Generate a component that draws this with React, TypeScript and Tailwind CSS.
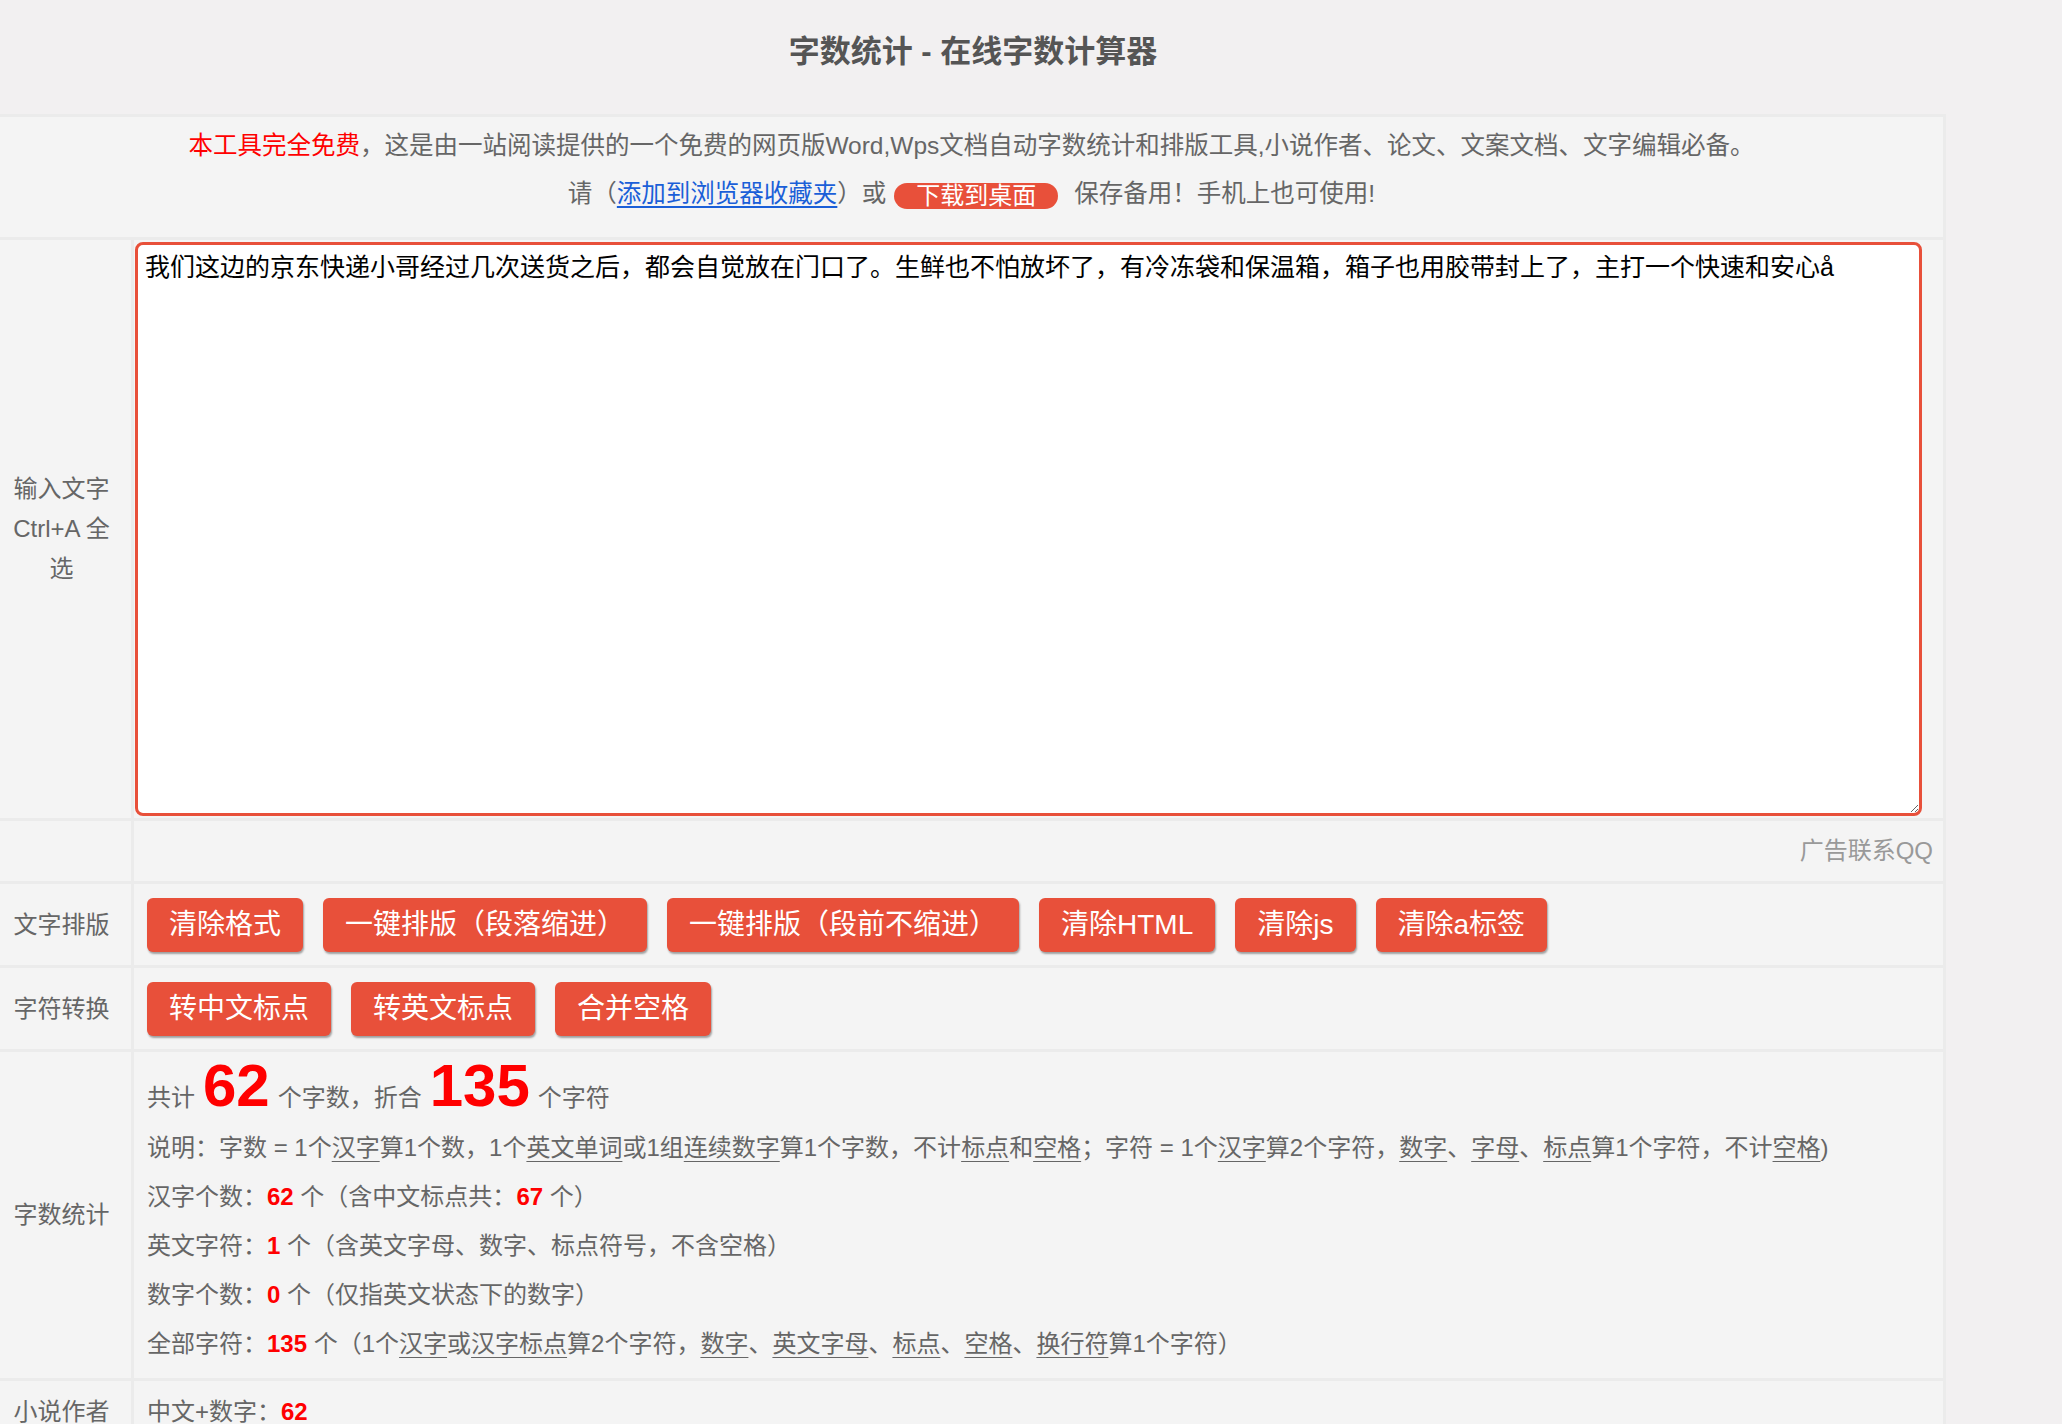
import React, { useState } from 'react';

const SAMPLE =
  '我们这边的京东快递小哥经过几次送货之后，都会自觉放在门口了。生鲜也不怕放坏了，有冷冻袋和保温箱，箱子也用胶带封上了，主打一个快速和安心å';

const layoutButtons = ['清除格式', '一键排版（段落缩进）', '一键排版（段前不缩进）', '清除HTML', '清除js', '清除a标签'];
const convertButtons = ['转中文标点', '转英文标点', '合并空格'];

const RedButton: React.FC<{ label: string }> = ({ label }) => (
  <button className="h-[54px] rounded-[6px] bg-[#e8503a] px-[22px] text-[28px] leading-[54px] text-white shadow-[1px_2px_2px_rgba(0,0,0,0.35)]">
    {label}
  </button>
);

const U: React.FC<{ children: React.ReactNode }> = ({ children }) => (
  <span className="underline underline-offset-[5px] decoration-[1px]">{children}</span>
);

const Num: React.FC<{ children: React.ReactNode }> = ({ children }) => (
  <b className="font-bold text-[#ff0000]">{children}</b>
);

const Label: React.FC<{ children?: React.ReactNode }> = ({ children }) => (
  <div className="flex items-center justify-center bg-[#f4f4f4] pl-[12px] pr-[20px] text-center text-[24px] leading-[40px] text-[#666]">
    <div>{children}</div>
  </div>
);

export default function App() {
  const [text, setText] = useState(SAMPLE);

  return (
    <div className="min-h-screen w-full bg-[#f2f0f1] font-['Liberation_Sans','Noto_Sans_CJK_SC',sans-serif]">
      {/* Header */}
      <h1 className="h-[114px] w-[1946px] pt-[32px] text-center text-[31px] font-bold leading-[40px] text-[#555]">
        字数统计 - 在线字数计算器
      </h1>

      <div className="grid w-[1946px] grid-cols-[131px_1809px] gap-[3px] bg-[#ebebeb] pr-[3px] pt-[3px]">
        {/* Notice */}
        <div className="col-span-2 h-[120px] bg-[#f4f4f4] pt-[5px] text-center text-[24.5px] leading-[48px] text-[#666]">
          <p>
            <span className="text-[#ff0000]">本工具完全免费</span>，这是由一站阅读提供的一个免费的网页版Word,Wps文档自动字数统计和排版工具,小说作者、论文、文案文档、文字编辑必备。
          </p>
          <p>
            请（<a href="#" className="text-[#1a5fd8] underline underline-offset-[4px]">添加到浏览器收藏夹</a>）或
            <span className="ml-[8px] mr-[10px] inline-block h-[26px] rounded-full bg-[#e8503a] px-[22px] align-middle text-[24px] leading-[26px] text-white">
              下载到桌面
            </span>
            <span className="ml-[6px]">保存备用！手机上也可使用!</span>
          </p>
        </div>

        {/* Input */}
        <Label>
          <div className="w-[99px]">输入文字 Ctrl+A 全选</div>
        </Label>
        <div className="bg-[#f4f4f4] py-[2px] pl-[1px]">
          <textarea
            value={text}
            onChange={(e) => setText(e.target.value)}
            className="block h-[574px] w-[1787px] rounded-[8px] border-[3px] border-[#e8503a] bg-white px-[7px] py-[6px] text-[25px] leading-[32px] text-black outline-none"
          />
        </div>

        {/* Ad */}
        <Label />
        <div className="flex h-[60px] items-center justify-end bg-[#f4f4f4] pr-[10px] text-[24px] text-[#999]">
          广告联系QQ
        </div>

        {/* Layout */}
        <Label>文字排版</Label>
        <div className="flex h-[81px] items-center gap-[20px] bg-[#f4f4f4] pl-[13px]">
          {layoutButtons.map((b) => (
            <RedButton key={b} label={b} />
          ))}
        </div>

        {/* Convert */}
        <Label>字符转换</Label>
        <div className="flex h-[81px] items-center gap-[20px] bg-[#f4f4f4] pl-[13px]">
          {convertButtons.map((b) => (
            <RedButton key={b} label={b} />
          ))}
        </div>

        {/* Stats */}
        <Label>字数统计</Label>
        <div className="h-[326px] bg-[#f4f4f4] pl-[13px] text-[24px] leading-[49px] text-[#666]">
          <div className="h-[68px] leading-[68px]">
            共计<b className="mx-[8px] text-[60px] font-bold text-[#ff0000]">62</b>个字数，折合
            <b className="mx-[8px] text-[60px] font-bold text-[#ff0000]">135</b>个字符
          </div>
          <div className="mt-[3px]">
            说明：字数 = 1个<U>汉字</U>算1个数，1个<U>英文单词</U>或1组<U>连续数字</U>算1个字数，不计<U>标点</U>和<U>空格</U>；字符 = 1个<U>汉字</U>算2个字符，<U>数字</U>、<U>字母</U>、<U>标点</U>算1个字符，不计<U>空格</U>)
          </div>
          <div>
            汉字个数：<Num>62</Num> 个（含中文标点共：<Num>67</Num> 个）
          </div>
          <div>
            英文字符：<Num>1</Num> 个（含英文字母、数字、标点符号，不含空格）
          </div>
          <div>
            数字个数：<Num>0</Num> 个（仅指英文状态下的数字）
          </div>
          <div>
            全部字符：<Num>135</Num> 个（1个<U>汉字</U>或<U>汉字标点</U>算2个字符，<U>数字</U>、<U>英文字母</U>、<U>标点</U>、<U>空格</U>、<U>换行符</U>算1个字符）
          </div>
        </div>

        {/* Novel authors */}
        <div className="bg-[#f4f4f4] pl-[12px] pr-[20px] pt-[6px] text-center text-[24px] leading-[49px] text-[#666]">
          小说作者
        </div>
        <div className="h-[80px] bg-[#f4f4f4] pl-[13px] pt-[6px] text-[24px] leading-[49px] text-[#666]">
          中文+数字：<Num>62</Num>
        </div>
      </div>
    </div>
  );
}
